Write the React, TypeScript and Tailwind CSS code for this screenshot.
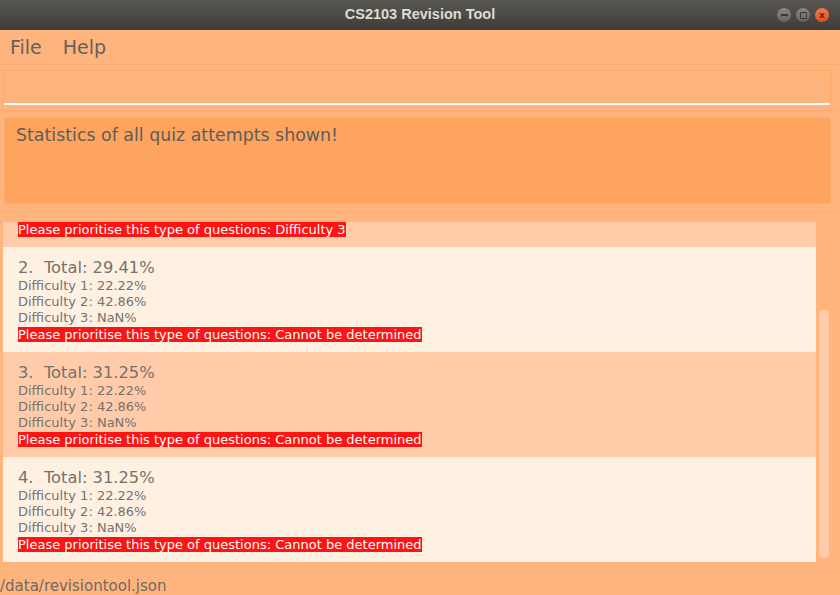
import React from "react"

const stats = [
  { n: 1, total: "29.41%", d1: "22.22%", d2: "42.86%", d3: "NaN%", prio: "Difficulty 3" },
  { n: 2, total: "29.41%", d1: "22.22%", d2: "42.86%", d3: "NaN%", prio: "Cannot be determined" },
  { n: 3, total: "31.25%", d1: "22.22%", d2: "42.86%", d3: "NaN%", prio: "Cannot be determined" },
  { n: 4, total: "31.25%", d1: "22.22%", d2: "42.86%", d3: "NaN%", prio: "Cannot be determined" },
]

type Stat = (typeof stats)[number]

function TitleBar() {
  return (
    <div className="relative flex h-[30px] items-center justify-center bg-gradient-to-b from-[#5a5852] to-[#3d3c38]">
      <span
        className="text-[14.5px] font-bold text-[#dfdbd2]"
        style={{ fontFamily: '"Liberation Sans", sans-serif' }}
      >
        CS2103 Revision Tool
      </span>
      <div className="absolute right-[11px] top-[8px] flex gap-[5px]">
        <div className="flex h-[14px] w-[14px] items-center justify-center rounded-full bg-gradient-to-b from-[#8a8780] to-[#67645e]">
          <div className="h-[1.5px] w-[7px] bg-[#3a3935]" />
        </div>
        <div className="flex h-[14px] w-[14px] items-center justify-center rounded-full bg-gradient-to-b from-[#8a8780] to-[#67645e]">
          <div className="h-[7px] w-[7px] rounded-[1px] border border-[#3a3935]" />
        </div>
        <div className="flex h-[14px] w-[14px] items-center justify-center rounded-full bg-gradient-to-b from-[#f27a4c] to-[#e0501c] text-[9px] font-bold leading-none text-[#5a2a12]">
          x
        </div>
      </div>
    </div>
  )
}

function PrioLabel({ s }: { s: Stat }) {
  return (
    <div className="flex">
      <span className="bg-[#ff1313] text-[13px] leading-[15px] text-white">
        Please prioritise this type of questions: {s.prio}
      </span>
    </div>
  )
}

function StatCell({ s, alt }: { s: Stat; alt: boolean }) {
  return (
    <div className={`h-[105px] pl-[15px] pt-[11px] ${alt ? "bg-[#ffcba8]" : "bg-[#fff1e2]"}`}>
      <div className="h-[20px] text-[16.3px] leading-[20px] text-[#76726d]">
        {s.n}.&nbsp; Total: {s.total}
      </div>
      <div className="mb-px text-[13px] leading-[16px] text-[#76726d]">
        <div>Difficulty 1: {s.d1}</div>
        <div>Difficulty 2: {s.d2}</div>
        <div>Difficulty 3: {s.d3}</div>
      </div>
      <PrioLabel s={s} />
    </div>
  )
}

export default function App() {
  const [first, ...rest] = stats
  return (
    <div
      className="flex h-[595px] w-[840px] flex-col overflow-hidden bg-[#ffb47e]"
      style={{ fontFamily: '"DejaVu Sans", sans-serif' }}
    >
      <TitleBar />

      <div className="flex h-[35px] items-center gap-[21px] border-b border-[#fcab74] pl-[10px] text-[19px] text-[#66615c]">
        <span>File</span>
        <span>Help</span>
      </div>

      <div className="border-b border-[#fcab74] px-[3px] pt-[5px] pb-[6px]">
        <div className="h-[34px] w-[828px] border border-b-0 border-[#ffa865] bg-[#ffb47e]">
          <div className="h-[32px]" />
          <div className="h-[2px] bg-white" />
        </div>
      </div>

      <div className="border-b border-[#fcab74] px-[4px] pt-[6px] pb-[7px]">
        <div className="h-[87px] w-[827px] border border-[#ffae71] bg-[#ffa45f] pl-[11px] pt-[4px] text-[17.4px] text-[#5d5e58]">
          Statistics of all quiz attempts shown!
        </div>
      </div>

      <div className="flex h-[360px] border-b border-[#fcab74] pt-[10px] pl-[3px]">
        <div className="h-[340px] w-[813px] overflow-hidden">
          {/* first cell is scrolled mostly out of view: only its last line shows */}
          <div className="h-[25px] bg-[#ffcba8] pl-[15px]">
            <PrioLabel s={first} />
          </div>
          {rest.map((s, i) => (
            <StatCell key={s.n} s={s} alt={i % 2 === 1} />
          ))}
        </div>
        <div className="ml-[3px] flex w-[10px] flex-col pt-[88px]">
          <div className="h-[248px] rounded-[4px] bg-[#ffcba8]" />
        </div>
      </div>

      <div className="flex-1 pt-[5px] text-[15px] leading-[18px] text-[#6f6a65]">/data/revisiontool.json</div>
    </div>
  )
}
